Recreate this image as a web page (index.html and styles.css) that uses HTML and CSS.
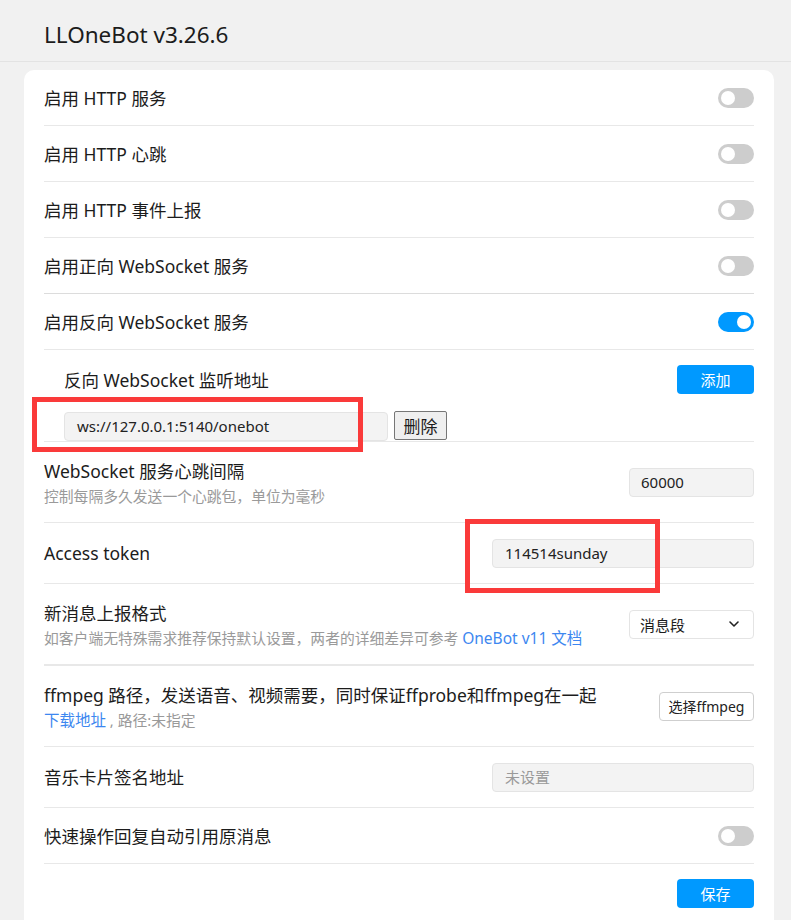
FILE: index.html
```html
<!DOCTYPE html>
<html lang="zh-CN">
<head>
<meta charset="utf-8">
<title>LLOneBot</title>
<link rel="stylesheet" href="styles.css">
</head>
<body>
<header class="header"><h1 class="title">LLOneBot v3.26.6</h1></header>
<main class="card">
  <div class="row"><span class="label">启用 HTTP 服务</span><span class="switch"></span></div>
  <div class="row"><span class="label">启用 HTTP 心跳</span><span class="switch"></span></div>
  <div class="row"><span class="label">启用 HTTP 事件上报</span><span class="switch"></span></div>
  <div class="row"><span class="label">启用正向 WebSocket 服务</span><span class="switch"></span></div>
  <div class="row"><span class="label">启用反向 WebSocket 服务</span><span class="switch on"></span></div>
  <div class="sub">
    <div class="sub-head"><span class="label">反向 WebSocket 监听地址</span><button class="btn-primary">添加</button></div>
    <div class="sub-item"><div class="input wide">ws://127.0.0.1:5140/onebot</div><button class="btn-native">删除</button></div>
  </div>
  <div class="row tall">
    <div class="texts"><div class="label">WebSocket 服务心跳间隔</div><div class="desc">控制每隔多久发送一个心跳包，单位为毫秒</div></div>
    <div class="input small">60000</div>
  </div>
  <div class="row mid">
    <span class="label">Access token</span>
    <div class="input long">114514sunday</div>
  </div>
  <div class="row tall thick">
    <div class="texts"><div class="label">新消息上报格式</div><div class="desc">如客户端无特殊需求推荐保持默认设置，两者的详细差异可参考 <a class="link">OneBot v11 文档</a></div></div>
    <div class="select"><span>消息段</span><svg width="14" height="14" viewBox="0 0 14 14"><path d="M3 5l4 4 4-4" fill="none" stroke="#222" stroke-width="1.6" stroke-linecap="round" stroke-linejoin="round"/></svg></div>
  </div>
  <div class="row tall">
    <div class="texts"><div class="label">ffmpeg 路径，发送语音、视频需要，同时保证ffprobe和ffmpeg在一起</div><div class="desc"><a class="link">下载地址</a> , 路径:未指定</div></div>
    <button class="btn-outline">选择ffmpeg</button>
  </div>
  <div class="row mid">
    <span class="label">音乐卡片签名地址</span>
    <div class="input long placeholder">未设置</div>
  </div>
  <div class="row"><span class="label">快速操作回复自动引用原消息</span><span class="switch"></span></div>
  <div class="footer"><button class="btn-primary">保存</button></div>
</main>
<div class="mark mark-1"></div>
<div class="mark mark-2"></div>
</body>
</html>
```
FILE: styles.css
```css
html, body {
  margin: 0;
  padding: 0;
  background: #f1f1f1;
  font-family: "Noto Sans", "Noto Sans CJK SC", sans-serif;
  color: #1c1c1c;
}
body { position: relative; min-height: 920px; }
.header {
  height: 61px;
  border-bottom: 1px solid #e3e3e3;
  padding-left: 44px;
  box-sizing: content-box;
}
.title {
  margin: 0;
  font-weight: 400;
  font-size: 22.5px;
  line-height: 69px;
  height: 61px;
}
.card {
  margin: 8px 0 0 24px;
  width: 710px;
  padding: 0 20px;
  background: #fff;
  border-radius: 10px 10px 0 0;
}
.row {
  display: flex;
  align-items: center;
  justify-content: space-between;
  height: 56px;
  border-bottom: 1px solid #e8e8e8;
  box-sizing: border-box;
}
.row:nth-child(4) { border-bottom-color: #dcdcdc; }
.row.mid { height: 61px; }
.row.tall { height: 81px; }
.row.thick { border-bottom: 2px solid #e8e8e8; height: 82px; }
.label { font-size: 17.5px; line-height: 24px; }
.texts { display: flex; flex-direction: column; gap: 3px; }
.desc { font-size: 14.8px; color: #9a9a9a; line-height: 20px; }
.link { color: #3d87f0; text-decoration: none; font-size: 15.5px; }
.switch {
  width: 36px;
  height: 20px;
  border-radius: 10px;
  background: #cdcdcd;
  position: relative;
  flex: none;
}
.switch::after {
  content: "";
  position: absolute;
  left: 3px;
  top: 3px;
  width: 14px;
  height: 14px;
  border-radius: 50%;
  background: #fff;
}
.switch.on { background: #0099ff; }
.switch.on::after { left: 19px; }
.sub {
  padding: 15px 0 0 20px;
  height: 92px;
  box-sizing: border-box;
  border-bottom: 1px solid #e8e8e8;
}
.sub-head {
  display: flex;
  align-items: center;
  justify-content: space-between;
  height: 29px;
}
.sub-item {
  display: flex;
  align-items: center;
  gap: 6px;
  margin-top: 16px;
}
.btn-primary {
  width: 77px;
  height: 29px;
  border: none;
  border-radius: 4px;
  background: #0099ff;
  color: #fff;
  font-family: inherit;
  font-size: 15px;
  padding: 0;
}
.input {
  height: 29px;
  box-sizing: border-box;
  background: #f3f3f3;
  border: 1px solid #e4e4e4;
  border-radius: 4px;
  padding-left: 12px;
  font-size: 15px;
  line-height: 27px;
  color: #222;
}
.input.wide { width: 324px; margin-top: 2px; }
.input.small { width: 125px; padding-left: 11px; }
.input.long { width: 262px; }
.input.placeholder { color: #9a9a9a; }
.btn-native {
  width: 53px;
  height: 29px;
  border: 1px solid #767676;
  border-radius: 2px;
  background: #efefef;
  font-family: inherit;
  font-size: 17px;
  color: #1c1c1c;
  padding: 0;
}
.select {
  width: 125px;
  height: 29px;
  box-sizing: border-box;
  border: 1px solid #e4e4e4;
  border-radius: 4px;
  display: flex;
  align-items: center;
  justify-content: space-between;
  padding: 0 12px 0 10px;
  font-size: 15px;
}
.btn-outline {
  width: 95px;
  height: 29px;
  border: 1px solid #cfcfcf;
  border-radius: 4px;
  background: #fff;
  font-family: inherit;
  font-size: 14px;
  color: #222;
  padding: 0;
}
.footer {
  padding: 15px 0 20px;
  display: flex;
  justify-content: flex-end;
}
.mark {
  position: absolute;
  border: 5px solid #fa3a3a;
  box-sizing: border-box;
}
.mark-1 { left: 32px; top: 397px; width: 331px; height: 55px; }
.mark-2 { left: 465px; top: 519px; width: 195px; height: 74px; }
```
